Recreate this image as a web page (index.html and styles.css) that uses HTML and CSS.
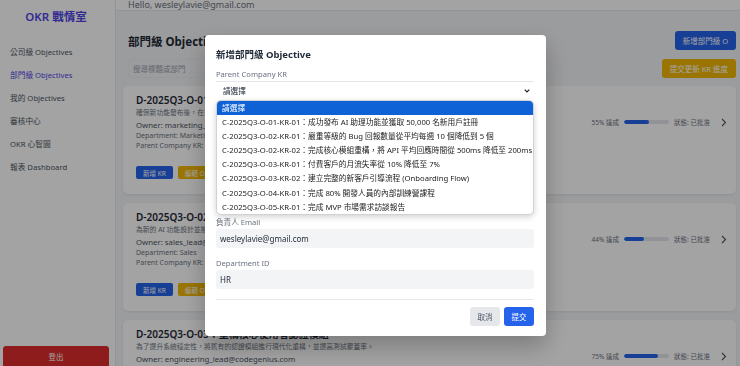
FILE: index.html
```html
<!DOCTYPE html>
<html lang="zh-Hant">
<head>
  <meta charset="UTF-8" />
  <meta name="viewport" content="width=device-width, initial-scale=1" />
  <title>OKR 戰情室</title>
  <link rel="stylesheet" href="styles.css">
</head>
<body>

  <aside class="sidebar">
    <div class="brand">OKR 戰情室</div>
    <nav class="nav">
      <a href="#">公司級 Objectives</a>
      <a href="#" class="active">部門級 Objectives</a>
      <a href="#">我的 Objectives</a>
      <a href="#">審核中心</a>
      <a href="#">OKR 心智圖</a>
      <a href="#">報表 Dashboard</a>
    </nav>
    <button class="logout">登出</button>
  </aside>

  <div class="main">
    <header class="topbar">Hello, wesleylavie@gmail.com</header>

    <div class="content">
      <div class="page-head">
        <h1>部門級 Objectives</h1>
        <button class="btn btn-blue">新增部門級 O</button>
      </div>

      <div class="toolbar">
        <input class="search" type="text" placeholder="搜尋標題或部門">
        <button class="btn btn-yellow">提交更新 KR 進度</button>
      </div>

      <div class="cards">
        <article class="card">
          <div class="card-top">
            <div class="card-info">
              <h3>D-2025Q3-O-01：新功能上線後達成市場滲透目標</h3>
              <p class="desc">確保新功能發布後，在目標市場取得初步成效並建立品牌認知。</p>
              <p class="owner">Owner: marketing_lead@codegenius.com</p>
              <p class="meta">Department: Marketing</p>
              <p class="meta">Parent Company KR: C-2025Q3-O-01-KR-01</p>
            </div>
            <div class="progress">
              <span>55% 達成</span>
              <div class="bar"><div class="fill" style="width: 55%"></div></div>
              <span>狀態: 已批准</span>
              <svg class="chev" width="6" height="9" viewBox="0 0 6 9"><path d="M1 1l3.5 3.5L1 8" fill="none" stroke="#4b5563" stroke-width="1.1"/></svg>
            </div>
          </div>
          <div class="card-actions">
            <button class="btn-sm btn-blue">新增 KR</button>
            <button class="btn-sm btn-yellow">編輯 O</button>
          </div>
        </article>

        <article class="card">
          <div class="card-top">
            <div class="card-info">
              <h3>D-2025Q3-O-02：推動 AI 功能的企業銷售</h3>
              <p class="desc">為新的 AI 功能設計並推動銷售策略，提升企業客戶採用率。</p>
              <p class="owner">Owner: sales_lead@codegenius.com</p>
              <p class="meta">Department: Sales</p>
              <p class="meta">Parent Company KR: C-2025Q3-O-01-KR-01</p>
            </div>
            <div class="progress">
              <span>44% 達成</span>
              <div class="bar"><div class="fill" style="width: 44%"></div></div>
              <span>狀態: 已批准</span>
              <svg class="chev" width="6" height="9" viewBox="0 0 6 9"><path d="M1 1l3.5 3.5L1 8" fill="none" stroke="#4b5563" stroke-width="1.1"/></svg>
            </div>
          </div>
          <div class="card-actions">
            <button class="btn-sm btn-blue">新增 KR</button>
            <button class="btn-sm btn-yellow">編輯 O</button>
          </div>
        </article>

        <article class="card">
          <div class="card-top">
            <div class="card-info">
              <h3>D-2025Q3-O-03：重構核心使用者認證模組</h3>
              <p class="desc">為了提升系統穩定性，將舊有的認證模組進行現代化重構，並提高測試覆蓋率。</p>
              <p class="owner">Owner: engineering_lead@codegenius.com</p>
              <p class="meta">Department: Engineering</p>
              <p class="meta">Parent Company KR: C-2025Q3-O-02-KR-02</p>
            </div>
            <div class="progress">
              <span>75% 達成</span>
              <div class="bar"><div class="fill" style="width: 75%"></div></div>
              <span>狀態: 已批准</span>
              <svg class="chev" width="6" height="9" viewBox="0 0 6 9"><path d="M1 1l3.5 3.5L1 8" fill="none" stroke="#4b5563" stroke-width="1.1"/></svg>
            </div>
          </div>
          <div class="card-actions">
            <button class="btn-sm btn-blue">新增 KR</button>
            <button class="btn-sm btn-yellow">編輯 O</button>
          </div>
        </article>
      </div>
    </div>
  </div>

  <div class="overlay">
    <form class="modal">
      <h2>新增部門級 Objective</h2>

      <div class="field">
        <label>Parent Company KR</label>
        <div class="select-box">
          <span>請選擇</span>
          <svg width="6" height="4" viewBox="0 0 6 4"><path d="M0.7 0.7L3 3l2.3-2.3" fill="none" stroke="#222" stroke-width="1.2"/></svg>
        </div>
        <ul class="options">
          <li class="selected">請選擇</li>
          <li>C-2025Q3-O-01-KR-01：成功發布 AI 助理功能並獲取 50,000 名新用戶註冊</li>
          <li>C-2025Q3-O-02-KR-01：嚴重等級的 Bug 回報數量從平均每週 10 個降低到 5 個</li>
          <li>C-2025Q3-O-02-KR-02：完成核心模組重構，將 API 平均回應時間從 500ms 降低至 200ms</li>
          <li>C-2025Q3-O-03-KR-01：付費客戶的月流失率從 10% 降低至 7%</li>
          <li>C-2025Q3-O-03-KR-02：建立完整的新客戶引導流程 (Onboarding Flow)</li>
          <li>C-2025Q3-O-04-KR-01：完成 80% 開發人員的內部訓練營課程</li>
          <li>C-2025Q3-O-05-KR-01：完成 MVP 市場需求訪談報告</li>
        </ul>
      </div>

      <div class="field">
        <label>Objective 標題</label>
        <input type="text">
      </div>

      <div class="field">
        <label>描述</label>
        <textarea></textarea>
      </div>

      <div class="field">
        <label>負責人 Email</label>
        <input type="text" value="wesleylavie@gmail.com">
      </div>

      <div class="field">
        <label>Department ID</label>
        <input type="text" value="HR">
      </div>

      <div class="modal-foot">
        <button type="button" class="btn-cancel">取消</button>
        <button type="button" class="btn-submit">提交</button>
      </div>
    </form>
  </div>

</body>
</html>
```

FILE: styles.css
```css
:root {
  --indigo: #4f46e5;
  --blue: #2563eb;
  --yellow: #f2b705;
  --red: #e02d2d;
  --gray-bg: #f3f4f6;
  --border: #e5e7eb;
  --text: #1f2937;
  --muted: #6b7280;
}

* {
  box-sizing: border-box;
  margin: 0;
  padding: 0;
}

body {
  font-family: "Noto Sans", "Noto Sans CJK TC", sans-serif;
  color: var(--text);
  background: var(--gray-bg);
  display: flex;
  height: 100vh;
  overflow: hidden;
}

button, input, textarea {
  font-family: inherit;
}

/* sidebar */

.sidebar {
  width: 116px;
  flex-shrink: 0;
  background: #fff;
  border-right: 1px solid var(--border);
  display: flex;
  flex-direction: column;
  padding: 9px 6px 0 3px;
}

.brand {
  text-align: center;
  font-size: 11.5px;
  line-height: 16px;
  font-weight: 600;
  color: var(--indigo);
}

.nav {
  margin-top: 16px;
  display: flex;
  flex-direction: column;
}

.nav a {
  font-size: 7.7px;
  line-height: 23px;
  color: #4b5563;
  text-decoration: none;
  padding-left: 7px;
}

.nav a.active {
  color: var(--indigo);
}

.logout {
  margin-top: auto;
  height: 20px;
  border: none;
  border-radius: 3px 3px 0 0;
  background: var(--red);
  color: #fff;
  font-size: 7.5px;
}

/* main */

.main {
  flex: 1;
  min-width: 0;
  display: flex;
  flex-direction: column;
}

.topbar {
  height: 12px;
  background: #fff;
  border-bottom: 1px solid var(--border);
  font-size: 9px;
  line-height: 10px;
  color: var(--muted);
  padding-left: 12px;
}

.content {
  padding: 20px 4px 0 7px;
}

.page-head,
.toolbar {
  display: flex;
  justify-content: space-between;
  align-items: center;
  padding-left: 5px;
}

.page-head h1 {
  font-size: 11.5px;
  font-weight: 700;
}

.toolbar {
  margin-top: 9px;
}

.search {
  width: 200px;
  height: 19px;
  border: 1px solid #eceef1;
  border-radius: 3px;
  background: transparent;
  padding: 0 4px;
  font-size: 7.5px;
}

.search::placeholder {
  color: #9ca3af;
}

.btn {
  height: 19px;
  border: none;
  border-radius: 3px;
  color: #fff;
  font-size: 7.5px;
  padding: 0 8px;
}

.btn-blue {
  background: var(--blue);
}

.btn-yellow {
  background: var(--yellow);
}

.cards {
  margin-top: 8px;
  display: flex;
  flex-direction: column;
  gap: 9px;
}

.card {
  background: #fff;
  border-radius: 5px;
  box-shadow: 0 1px 3px rgba(0, 0, 0, 0.08);
  padding: 7px 9px 15px 13px;
}

.card-top {
  display: flex;
  align-items: center;
}

.card-info {
  flex: 1;
  min-width: 0;
}

.card-info h3 {
  font-size: 10px;
  line-height: 14px;
  font-weight: 600;
  white-space: nowrap;
}

.desc {
  font-size: 6.8px;
  line-height: 12px;
  color: var(--muted);
}

.owner {
  font-size: 7.8px;
  line-height: 12px;
  color: #4b5563;
}

.meta {
  font-size: 7px;
  line-height: 10px;
  color: var(--muted);
}

.progress {
  display: flex;
  align-items: center;
  gap: 5px;
  font-size: 6.5px;
  color: var(--muted);
}

.bar {
  width: 45px;
  height: 4px;
  border-radius: 2px;
  background: var(--border);
  overflow: hidden;
}

.fill {
  height: 100%;
  border-radius: 2px;
  background: var(--blue);
}

.chev {
  margin-left: 6px;
}

.card-actions {
  display: flex;
  gap: 5px;
  margin-top: 15px;
}

.btn-sm {
  height: 13px;
  border: none;
  border-radius: 2px;
  color: #fff;
  font-size: 6.5px;
  padding: 0 7px;
}

/* modal */

.overlay {
  position: fixed;
  inset: 0;
  background: rgba(0, 0, 0, 0.36);
  display: flex;
  align-items: center;
  justify-content: center;
  padding: 4px 0 0 11px;
}

.modal {
  width: 341px;
  background: #fff;
  border-radius: 4px;
  padding: 13px 12px 10px 11px;
  box-shadow: 0 10px 25px rgba(0, 0, 0, 0.25);
}

.modal h2 {
  font-size: 9.5px;
  line-height: 13px;
  font-weight: 700;
  margin-bottom: 8px;
}

.field {
  position: relative;
  margin-bottom: 10px;
}

.field:last-of-type {
  margin-bottom: 9px;
}

.field label {
  display: block;
  font-size: 7.6px;
  line-height: 11px;
  color: var(--muted);
  margin-bottom: 1px;
}

.field input,
.field textarea {
  display: block;
  width: 100%;
  height: 19px;
  border: none;
  border-radius: 3px;
  background: var(--gray-bg);
  padding: 0 4px;
  font-size: 8px;
  color: var(--text);
}

.field textarea {
  height: 44px;
  resize: none;
}

.select-box {
  height: 19px;
  border-top: 1px solid var(--border);
  display: flex;
  align-items: center;
  justify-content: space-between;
  padding: 0 4px 0 7px;
  font-size: 7.6px;
}

.options {
  position: absolute;
  top: 31px;
  left: 0;
  right: 0;
  z-index: 2;
  list-style: none;
  background: #fff;
  border: 1px solid #cfd3d8;
  border-radius: 5px;
  box-shadow: 0 2px 6px rgba(0, 0, 0, 0.18);
  overflow: hidden;
}

.options li {
  height: 14.2px;
  line-height: 14.2px;
  padding-left: 5px;
  font-size: 7.7px;
  color: #222;
  white-space: nowrap;
}

.options li.selected {
  background: #0f62d6;
  color: #fff;
}

.modal-foot {
  border-top: 1px solid var(--border);
  padding-top: 7px;
  display: flex;
  justify-content: flex-end;
  gap: 4px;
}

.modal-foot button {
  height: 19px;
  border: none;
  border-radius: 3px;
  padding: 0 7.5px;
  font-size: 7.5px;
}

.btn-cancel {
  background: var(--border);
  color: #4b5563;
}

.btn-submit {
  background: var(--blue);
  color: #fff;
}
```
